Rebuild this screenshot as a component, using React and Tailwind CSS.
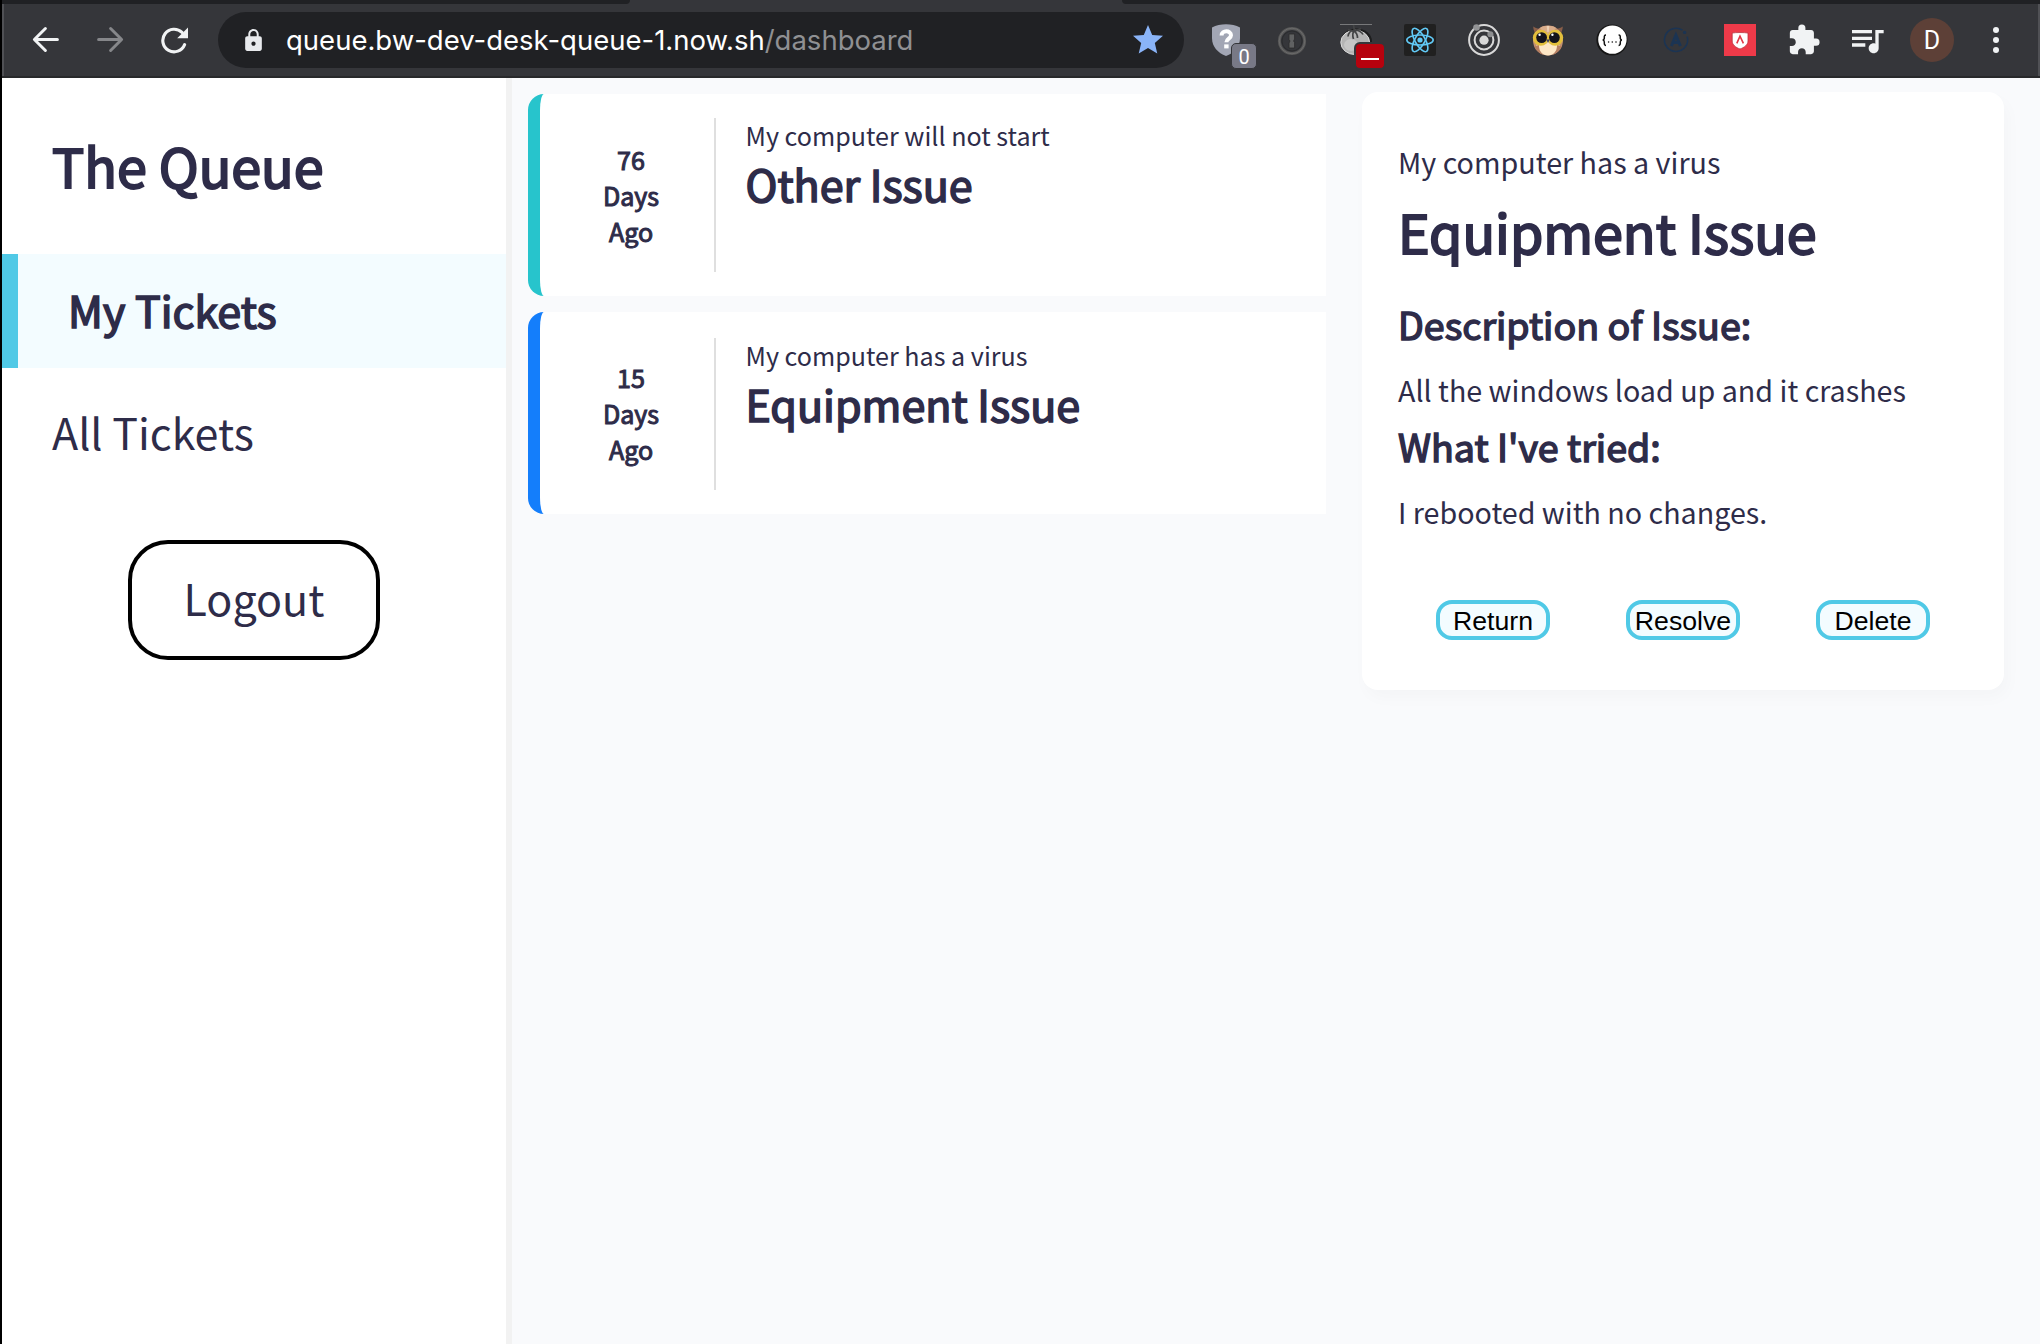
import React from "react";
import { MdExtension, MdQueueMusic, MdStar, MdLock } from "react-icons/md";

function BackIcon({ flip }) {
  return (
    <svg width="28" height="28" viewBox="0 0 28 28" fill="none" stroke="currentColor" strokeWidth="3" strokeLinecap="round" strokeLinejoin="round" className={flip ? "-scale-x-100" : ""}>
      <path d="M25.4 13.5H3M13.4 2.5L2.4 13.5L13.4 24.5" />
    </svg>
  );
}

function ReloadIcon() {
  return (
    <svg width="30" height="28" viewBox="0 0 30 28">
      <path d="M22.6 6.2A11.3 11.3 0 1 0 25.2 18.5" transform="translate(-0.6 0.2)" fill="none" stroke="#f1f3f4" strokeWidth="3.1" strokeLinecap="round" />
      <path d="M28 1.500V12.300H17.200Z" fill="#f1f3f4" />
    </svg>
  );
}

function Slot({ children }) {
  return <div className="relative flex h-12 w-16 shrink-0 items-center justify-center">{children}</div>;
}

function ShieldIcon() {
  return (
    <svg width="32" height="32" viewBox="0 0 32 32" className="-translate-x-px">
      <path d="M1 3.5C9 -0.8 21 -0.8 29 3.5V14C29 23 23 29 15 32C7 29 1 23 1 14Z" fill="#a2a6b4" />
      <path d="M10.6 11.4C10.6 6 20 6 20 11.2C20 14.6 15.4 14.6 15.4 18.2" fill="none" stroke="#fff" strokeWidth="4" />
      <rect x="13.2" y="20.4" width="4.4" height="4" fill="#fff" />
    </svg>
  );
}

function KeyholeIcon() {
  return (
    <svg width="32" height="32" viewBox="0 0 32 32" fill="none">
      <circle cx="16" cy="17" r="12.6" stroke="#575757" strokeWidth="3" />
      <circle cx="16" cy="17" r="12.8" stroke="#6f6f6f" strokeWidth="0.8" />
      <circle cx="16" cy="17" r="10" stroke="#2a2b2d" strokeWidth="1" />
      <path d="M13 10H18.6V15L17.6 17L18.6 18.5V24H13V19L14 17L13 15.5Z" fill="#606162" stroke="#2b2b2c" strokeWidth="0.8" />
    </svg>
  );
}

function TomatoIcon() {
  return (
    <svg width="32" height="32" viewBox="0 0 32 32">
      <rect width="32" height="1" fill="#77787a" />
      <ellipse cx="16.5" cy="17.2" rx="15.5" ry="12.8" fill="#1d1d1e" />
      <ellipse cx="15.2" cy="18.4" rx="14.4" ry="12.2" fill="#b4b4b4" stroke="#dcdcdc" strokeWidth="1" />
      <ellipse cx="11" cy="21" rx="7" ry="6" fill="#c6c6c6" />
      <path d="M13.500 1L14.500 7M14 6.500C10.500 6.500 8.500 9 8 12.500M14 7C12.500 9 12.500 12 13.500 15M14 7C17 9 17.500 11 17.500 14M14 6.500C18 5.500 22 8 23 10.500M8 5.500L14 7.500L21 4.500" stroke="#434445" strokeWidth="1.7" fill="none" />
    </svg>
  );
}

function ReactIcon() {
  return (
    <svg width="32" height="32" viewBox="0 0 32 32" fill="none" stroke="#61c9f5" strokeWidth="1.6">
      <rect width="32" height="32" rx="2" fill="#202020" stroke="none" />
      <ellipse cx="16" cy="16" rx="13.2" ry="5" />
      <ellipse cx="16" cy="16" rx="13.2" ry="5" transform="rotate(60 16 16)" />
      <ellipse cx="16" cy="16" rx="13.2" ry="5" transform="rotate(120 16 16)" />
      <circle cx="16" cy="16" r="2.6" fill="#61c9f5" stroke="none" />
    </svg>
  );
}

function OrbitIcon() {
  return (
    <svg width="32" height="32" viewBox="0 0 32 32" fill="none">
      <circle cx="16" cy="16" r="14.9" stroke="#d8d8d8" strokeWidth="2" />
      <circle cx="16" cy="16" r="9.4" stroke="#d8d8d8" strokeWidth="2" />
      <circle cx="16" cy="16.2" r="4.6" fill="#d8d8d8" />
      <circle cx="8.5" cy="3.5" r="3.3" fill="#929395" />
      <circle cx="22.4" cy="10.2" r="3" fill="#8d8e90" />
    </svg>
  );
}

function OwlIcon() {
  return (
    <svg width="32" height="32" viewBox="0 0 32 32">
      <path d="M1.2 2.6C4 4.4 7 5 10 5L5 12C2.4 9 1.4 6 1.2 2.6ZM30.8 2.6C28 4.4 25 5 22 5L27 12C29.600 9 30.600 6 30.800 2.600Z" fill="#8a5f49" />
      <circle cx="16" cy="16.5" r="15" fill="#c49272" />
      <path d="M8 4C11 1 21 1 24 4L16 14Z" fill="#d9ad8b" />
      <path d="M14.600 2H17.400L16.600 8H15.400Z" fill="#ecd0b4" />
      <path d="M4 21C9 19 13 18 16 16C19 18 23 19 28 21C27 27 22 31.400 16 31.400C10 31.400 5 27 4 21Z" fill="#fde7c6" />
      <path d="M2 22C4 27 8 30 12 31C8 28 7 25 7 21ZM30 22C28 27 24 30 20 31C24 28 25 25 25 21Z" fill="#b57f62" />
      <circle cx="8.800" cy="13.800" r="8" fill="#e3bf3c" />
      <circle cx="23.200" cy="13.800" r="8" fill="#e3bf3c" />
      <circle cx="9.600" cy="13.600" r="5.400" fill="#14131c" />
      <circle cx="22.400" cy="13.600" r="5.400" fill="#14131c" />
      <circle cx="7.600" cy="10.800" r="1.200" fill="#fff" />
      <circle cx="20.400" cy="10.800" r="1.200" fill="#fff" />
      <path d="M14.200 15.500H17.800L16 19Z" fill="#3a4060" />
    </svg>
  );
}

function JsonIcon() {
  return (
    <svg width="32" height="32" viewBox="0 0 32 32" fill="none">
      <circle cx="16" cy="16" r="15.6" fill="#161616" />
      <circle cx="16.4" cy="15.600" r="14.200" fill="#fff" />
      <path d="M10 11C7.600 11 8.600 13.400 8.200 14.800C8 15.600 7.400 16 6.600 16C7.400 16 8 16.400 8.200 17.200C8.600 18.600 7.600 21.400 10 21.400M22.600 11C25 11 24 13.400 24.400 14.800C24.600 15.600 25.200 16 26 16C25.200 16 24.600 16.400 24.400 17.200C24 18.600 25 21.400 22.600 21.400" stroke="#111" strokeWidth="1.5" />
      <circle cx="12.600" cy="18" r="0.8" fill="#111" />
      <circle cx="16.300" cy="18" r="0.8" fill="#111" />
      <circle cx="20" cy="18" r="0.8" fill="#111" />
    </svg>
  );
}

function ApolloIcon() {
  return (
    <svg width="32" height="32" viewBox="0 0 32 32" fill="none" stroke="#1b3453">
      <path d="M22.500 6.200A11.600 11.600 0 1 0 27.200 12.600" strokeWidth="1.600" />
      <circle cx="24.600" cy="8.400" r="1.700" fill="#1b3453" stroke="none" />
      <path d="M11.400 22L15.900 11.200L20.400 22M13 18.400H18" strokeWidth="3" />
    </svg>
  );
}

function AngularShieldIcon() {
  return (
    <svg width="32" height="32" viewBox="0 0 32 32">
      <rect width="32" height="32" fill="#ee3a49" />
      <path d="M8.200 9C12 8.400 20 8.400 24 9V17C24 21 20 23.600 16 25C12 23.600 8.200 21 8.200 17Z" fill="#fff" stroke="#b9303c" strokeWidth="0.8" />
      <path d="M12.800 19.400L16 12.200L19.400 19.400" fill="none" stroke="#e23846" strokeWidth="1.600" />
    </svg>
  );
}

function Toolbar() {
  return (
    <header className="flex h-[78px] w-full flex-col bg-[#35363a]">
      <div className="flex h-1 justify-between">
        <div className="w-[628px] rounded-br-lg bg-[#202124]" />
        <div className="w-[918px] rounded-bl-lg bg-[#202124]" />
      </div>
      <div className="flex h-[72px] items-center border-r-2 border-l-2 border-[#505155]">
        <div className="flex w-[214px] shrink-0 items-center pl-[28px] text-[#f1f3f4]">
          <BackIcon />
          <span className="ml-9 text-[#86878a]"><BackIcon flip /></span>
          <span className="ml-9"><ReloadIcon /></span>
        </div>
        <div className="flex h-14 w-[966px] shrink-0 items-center rounded-full bg-[#202124]">
          <MdLock className="ml-[23px] size-[25px] shrink-0 text-[#e8eaed]" />
          <div className="ml-[20px] flex-1 whitespace-nowrap font-['Inter',sans-serif] text-[27.5px] leading-10 text-white">
            queue.bw-dev-desk-queue-1.now.sh<span className="text-[#8f9093]">/dashboard</span>
          </div>
          <MdStar className="mr-[18px] size-[36px] shrink-0 text-[#8ab4f8]" />
        </div>
        <div className="ml-[12px] flex items-center">
          <Slot>
            <ShieldIcon />
            <div className="absolute top-[27px] left-[35px] flex h-[26px] w-[26px] items-center justify-center rounded-[5px] border border-[#35363a] bg-[#787986] pt-0.5 font-['Roboto',sans-serif] text-[20px] leading-none text-white">0</div>
          </Slot>
          <Slot><KeyholeIcon /></Slot>
          <Slot>
            <TomatoIcon />
            <div className="absolute top-[26px] left-[30px] flex h-7 w-8 items-center justify-center rounded-[6px] border-2 border-[#35363a] bg-[#b7020e]">
              <div className="mt-[6px] h-[2px] w-[18px] bg-white" />
            </div>
          </Slot>
          <Slot><ReactIcon /></Slot>
          <Slot><OrbitIcon /></Slot>
          <Slot><OwlIcon /></Slot>
          <Slot><JsonIcon /></Slot>
          <Slot><ApolloIcon /></Slot>
          <Slot><AngularShieldIcon /></Slot>
          <Slot><MdExtension className="size-[34px] text-[#f1f3f4]" /></Slot>
          <Slot><MdQueueMusic className="size-[40px] -translate-x-px text-[#f1f3f4]" /></Slot>
          <Slot>
            <div className="flex size-11 items-center justify-center rounded-full bg-[#5d4037] font-['Roboto',sans-serif] text-[25px] leading-none text-white">D</div>
          </Slot>
          <Slot>
            <div className="flex flex-col gap-1">
              <div className="size-1.5 rounded-full bg-[#f1f3f4]" />
              <div className="size-1.5 rounded-full bg-[#f1f3f4]" />
              <div className="size-1.5 rounded-full bg-[#f1f3f4]" />
            </div>
          </Slot>
        </div>
      </div>
      <div className="h-0.5 bg-[#28292b]" />
    </header>
  );
}

function Sidebar() {
  return (
    <aside className="flex w-[510px] shrink-0 flex-col border-r-[6px] border-[#f2f2f2] bg-white">
      <h1 className="mt-[49px] pl-[50px] text-[53.8px] leading-[76px] [-webkit-text-stroke:2px_#2e2c49]">The Queue</h1>
      <div className="mt-[51px] h-[114px] border-l-[16px] border-[#50c9e6] bg-[#f3fcff] pl-[50px] text-[43px] leading-[111px] [-webkit-text-stroke:1.6px_#2e2c49]">
        My Tickets
      </div>
      <div className="pl-[50px] text-[43px] leading-[127px]">All Tickets</div>
      <button className="mt-[45px] ml-[126px] h-[120px] w-[252px] rounded-[40px] border-4 border-black pb-[5px] text-[43px] leading-none">Logout</button>
    </aside>
  );
}

function Ticket({ days, note, title, color, inset }) {
  return (
    <article className={"flex h-[202px] rounded-l-2xl border-l-[12px] bg-white " + color}>
      <div className="w-[174px] shrink-0 pt-[47px] pl-[8px] text-center text-[25.1px] leading-9 [-webkit-text-stroke:1px_#2e2c49]">
        {days}
        <br />
        Days
        <br />
        Ago
      </div>
      <div className={"mb-6 flex-1 border-l-2 border-[#dfdfdf] pl-[29.5px] " + inset}>
        <p className="-mt-px text-[25.1px] leading-9">{note}</p>
        <h2 className="text-[43px] leading-[60px] [-webkit-text-stroke:1.6px_#2e2c49]">{title}</h2>
      </div>
    </article>
  );
}

function ActionButton({ children }) {
  return (
    <button className="h-10 w-[114px] rounded-[16px] border-4 border-[#50c9e6] bg-[#f3fcff] pt-px text-center font-['Liberation_Sans',sans-serif] text-[26.67px] leading-8 text-black">
      {children}
    </button>
  );
}

function Detail() {
  return (
    <section className="mt-[14px] ml-9 h-[598px] w-[642px] rounded-[16px] bg-white px-9 pt-[50px] shadow-[4px_8px_16px_rgba(0,0,0,0.025)]">
      <p className="text-[28.7px] leading-10">My computer has a virus</p>
      <h2 className="mt-[11px] text-[53.8px] leading-[76px] [-webkit-text-stroke:2px_#2e2c49]">Equipment Issue</h2>
      <h3 className="mt-7 text-[37.6px] leading-[54px] [-webkit-text-stroke:1.5px_#2e2c49]">Description of Issue:</h3>
      <p className="mt-[19px] whitespace-nowrap text-[28.66px] leading-10">All the windows load up and it crashes</p>
      <h3 className="mt-[9px] text-[37.6px] leading-[54px] [-webkit-text-stroke:1.5px_#2e2c49]">What I've tried:</h3>
      <p className="mt-[19px] text-[28.66px] leading-10">I rebooted with no changes.</p>
      <div className="mt-[68px] flex justify-between px-[38px]">
        <ActionButton>Return</ActionButton>
        <ActionButton>Resolve</ActionButton>
        <ActionButton>Delete</ActionButton>
      </div>
    </section>
  );
}

export default function App() {
  return (
    <div className="h-[1344px] w-[2040px] overflow-hidden border-l-2 border-black bg-[#f9fafc] font-['Noto_Sans_CJK_SC',sans-serif] text-[#2e2c49]">
      <Toolbar />
      <main className="flex h-[1266px] items-stretch">
        <Sidebar />
        <div className="mt-4 ml-4 flex w-[798px] flex-col gap-4">
          <Ticket days="76" note="My computer will not start" title="Other Issue" color="border-[#27c4cc]" inset="mt-6" />
          <Ticket days="15" note="My computer has a virus" title="Equipment Issue" color="border-[#147efb]" inset="mt-[26px]" />
        </div>
        <Detail />
      </main>
    </div>
  );
}
